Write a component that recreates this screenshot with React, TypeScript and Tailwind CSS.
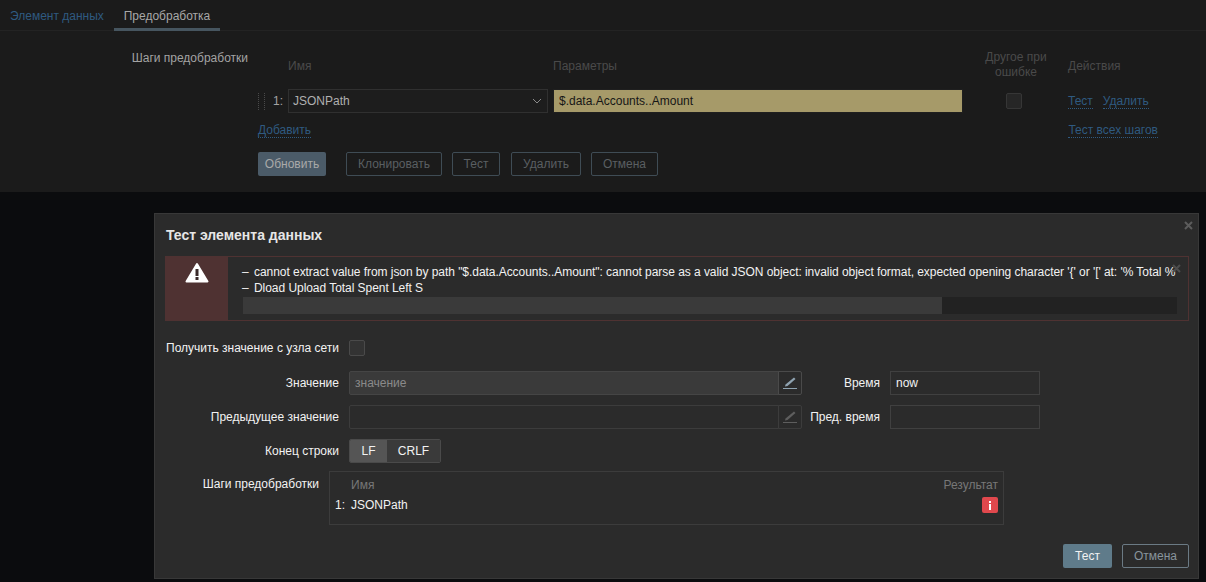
const Dotted = ({ children, className = "" }: { children: React.ReactNode; className?: string }) => (
  <span className={"text-[#2f5a80] border-b border-dotted border-[#2f5a80] leading-[14px] " + className}>{children}</span>
);

const TopButton = ({ children, className = "" }: { children: React.ReactNode; className?: string }) => (
  <div className={"h-6 flex items-center justify-center rounded-[2px] border border-[#3f4c55] text-[#5a5f62] " + className}>
    {children}
  </div>
);

const PenIcon = ({ color }: { color: string }) => (
  <svg width="16" height="16" viewBox="0 0 16 16" fill="none">
    <path d="M3.5 9.5 L12 2.5 L13.5 4 L5.5 11 L3 11.5 Z" fill={color} />
    <rect x="1" y="13" width="14" height="1" fill={color} />
  </svg>
);

const Field = ({ label, labelW, children }: { label: string; labelW: string; children: React.ReactNode }) => (
  <div className="flex items-center">
    <div className={"text-right text-[#f2f2f2] mr-[10px] whitespace-nowrap " + labelW}>{label}</div>
    {children}
  </div>
);

const App = () => {
  return (
    <div className="relative w-[1206px] h-[582px] overflow-hidden bg-[#0b0c0e] text-xs font-['Liberation_Sans',Arial,sans-serif]">
      <div className="h-[192px] bg-[#1b1b1b]">
        <div className="h-[31px] flex pl-[10px] border-b border-[#232323]">
          <div className="w-[104px] pt-[8px] text-[#2f5a80]">Элемент данных</div>
          <div className="w-[106px] h-[31px] border-b-[3px] border-[#46555f] text-center pt-[8px] text-[#a8a8a8]">
            Предобработка
          </div>
        </div>

        <div className="flex pt-[20px]">
          <div className="w-[248px] text-right text-[#a3a3a3] leading-[14px]">Шаги предобработки</div>
          <div className="ml-[10px] flex-1">
            <div className="grid grid-cols-[30px_265px_432px_83px_auto] items-center text-[#4a4a4a]">
              <div />
              <div>Имя</div>
              <div>Параметры</div>
              <div className="w-[62px] text-center leading-[15px] -mt-[1px]">Другое при ошибке</div>
              <div>Действия</div>
            </div>

            <div className="grid grid-cols-[30px_265px_432px_83px_auto] items-center mt-[9px] h-6">
              <div className="flex items-center">
                <div className="w-[7px] h-[17px] border-x border-dotted border-[#4a4a4a]" />
                <span className="ml-[8px] text-[#a3a3a3]">1:</span>
              </div>
              <div className="w-[260px] h-6 flex items-center justify-between pl-[4px] pr-[5px] bg-[#1d1d1d] border border-[#303030] text-[#b0b0b0]">
                JSONPath
                <svg width="10" height="6" viewBox="0 0 10 6" fill="none">
                  <path d="M1 1 L5 5 L9 1" stroke="#8a8a8a" />
                </svg>
              </div>
              <div className="w-[410px] h-6 flex items-center px-[5px] bg-[#a69a69] border border-[#1f1f1f] text-[#161616]">
                $.data.Accounts..Amount
              </div>
              <div className="pl-[21px]">
                <div className="w-4 h-4 rounded-[2px] bg-[#262626] border border-[#363636]" />
              </div>
              <div className="flex gap-[10px]">
                <Dotted>Тест</Dotted>
                <Dotted>Удалить</Dotted>
              </div>
            </div>

            <div className="flex justify-between w-[900px] mt-[10px]">
              <Dotted>Добавить</Dotted>
              <Dotted>Тест всех шагов</Dotted>
            </div>

            <div className="flex mt-[14px]">
              <div className="w-[68px] h-6 flex items-center justify-center rounded-[2px] bg-[#4b5b68] text-[#a9a9a9]">
                Обновить
              </div>
              <TopButton className="w-[96px] ml-[20px]">Клонировать</TopButton>
              <TopButton className="w-[48px] ml-[10px]">Тест</TopButton>
              <TopButton className="w-[70px] ml-[11px]">Удалить</TopButton>
              <TopButton className="w-[67px] ml-[10px]">Отмена</TopButton>
            </div>
          </div>
        </div>
      </div>

      <div className="absolute left-[154px] top-[213px] w-[1045px] h-[366px] bg-[#2b2b2b] border border-[#383838] pl-[11px] pr-[9px]">
        <svg className="absolute right-[5px] top-[7px]" width="9" height="9" viewBox="0 0 9 9">
          <path d="M1 1 L8 8 M8 1 L1 8" stroke="#5c5c5c" strokeWidth="2" />
        </svg>
        <div className="pt-[13px] text-sm font-bold text-[#e6e6e6] leading-[16px]">Тест элемента данных</div>

        <div className="relative flex mt-[13px] h-[65px] border border-[#4f3232] -ml-[1px]">
          <div className="w-[62px] bg-[#4f3232] flex justify-center pt-[5px] shrink-0">
            <svg width="24" height="21" viewBox="0 0 24 21">
              <path d="M12 2 L22.5 19.5 L1.5 19.5 Z" fill="#ffffff" stroke="#ffffff" strokeWidth="2" strokeLinejoin="round" />
              <rect x="10.5" y="7" width="3" height="7" fill="#3a2a2a" />
              <rect x="10.5" y="15" width="3" height="3" fill="#3a2a2a" />
            </svg>
          </div>
          <div className="flex-1 pl-[14px] pr-[11px] pt-[7px] text-[#f2f2f2] leading-[16px] min-w-0 tracking-[-0.05px]">
            <div className="flex whitespace-nowrap">
              <span className="w-[12px] shrink-0">–</span>
              <span>
                cannot extract value from json by path "$.data.Accounts..Amount": cannot parse as a valid JSON object: invalid object format, expected opening character '{"{"}' or '[' at: '% Total %
              </span>
            </div>
            <div className="flex">
              <span className="w-[12px] shrink-0">–</span>
              <span>Dload Upload Total Spent Left S</span>
            </div>
            <div className="h-[17px] mt-[1px] ml-[1px] bg-[#222222]">
              <div className="w-[699px] h-full bg-[#3a3a3a]" />
            </div>
          </div>
          <svg className="absolute right-[7px] top-[7px]" width="9" height="9" viewBox="0 0 9 9">
            <path d="M1 1 L8 8 M8 1 L1 8" stroke="#4d4d4d" strokeWidth="2" />
          </svg>
        </div>

        <div className="flex items-center mt-[19px] h-4">
          <div className="w-[173px] text-right text-[#f2f2f2] mr-[10px] whitespace-nowrap">Получить значение с узла сети</div>
          <div className="w-4 h-4 rounded-[2px] bg-[#333333] border border-[#4a4a4a]" />
        </div>

        <div className="flex mt-[15px] h-6">
          <Field label="Значение" labelW="w-[173px]">
            <div className="w-[430px] h-6 flex items-center pl-[5px] bg-[#3a3a3a] border border-[#454545] rounded-l-[2px] text-[#8a8a8a]">
              значение
            </div>
            <div className="w-6 h-6 flex items-center justify-center border border-[#4a4a4a] rounded-r-[2px] -ml-[1px]">
              <PenIcon color="#8ea2b0" />
            </div>
          </Field>
          <div className="ml-[4px]">
            <Field label="Время" labelW="w-[74px]">
              <div className="w-[150px] h-6 flex items-center pl-[5px] border border-[#404040] text-[#f2f2f2]">now</div>
            </Field>
          </div>
        </div>

        <div className="flex mt-[10px] h-6">
          <Field label="Предыдущее значение" labelW="w-[173px]">
            <div className="w-[430px] h-6 border border-[#3c3c3c] rounded-l-[2px]" />
            <div className="w-6 h-6 flex items-center justify-center border border-[#3c3c3c] rounded-r-[2px] -ml-[1px]">
              <PenIcon color="#5e5e5e" />
            </div>
          </Field>
          <div className="ml-[4px]">
            <Field label="Пред. время" labelW="w-[74px]">
              <div className="w-[150px] h-6 border border-[#404040]" />
            </Field>
          </div>
        </div>

        <div className="flex mt-[10px] h-6">
          <Field label="Конец строки" labelW="w-[173px]">
            <div className="flex h-6 rounded-[2px] border border-[#4a4a4a] overflow-hidden text-[#f2f2f2]">
              <div className="w-[37px] flex items-center justify-center bg-[#555555]">LF</div>
              <div className="w-[53px] flex items-center justify-center bg-[#3a3a3a]">CRLF</div>
            </div>
          </Field>
        </div>

        <div className="flex mt-[8px]">
          <div className="w-[153px] text-right text-[#f2f2f2] mr-[10px] pt-[6px] leading-[14px]">Шаги предобработки</div>
          <div className="w-[675px] h-[54px] border border-[#3c3c3c] pl-[5px] pr-[5px]">
            <div className="flex justify-between pl-[16px] pt-[6px] leading-[14px] text-[#777777]">
              <span>Имя</span>
              <span>Результат</span>
            </div>
            <div className="flex items-center mt-[5px] h-4 text-[#f2f2f2]">
              <span className="w-[16px]">1:</span>
              <span>JSONPath</span>
              <div className="ml-auto w-4 h-4 rounded-[2px] bg-[#e0484d] flex flex-col items-center justify-center gap-[1px]">
                <div className="w-[2px] h-[2px] bg-white" />
                <div className="w-[2px] h-[6px] bg-white" />
              </div>
            </div>
          </div>
        </div>

        <div className="flex justify-end mt-[19px]">
          <div className="w-[49px] h-6 flex items-center justify-center rounded-[2px] bg-[#5f7b8a] text-[#f2f2f2]">Тест</div>
          <div className="w-[67px] h-6 ml-[10px] flex items-center justify-center rounded-[2px] border border-[#6b7a84] text-[#88949c]">Отмена</div>
        </div>
      </div>
    </div>
  );
};

export default App;
